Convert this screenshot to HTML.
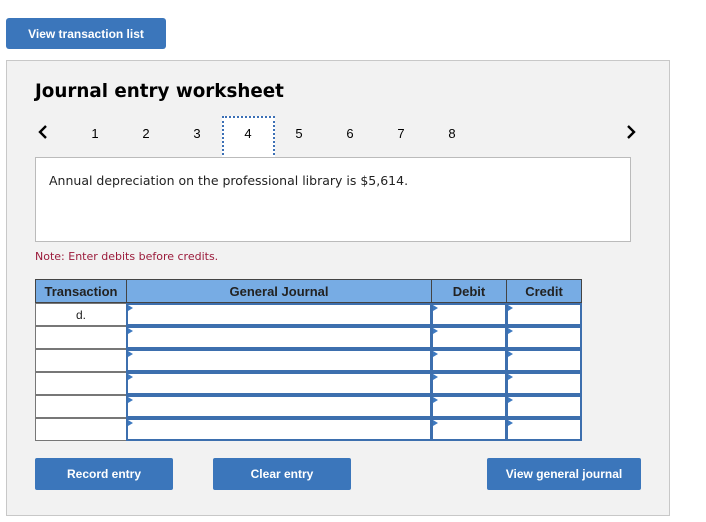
<!DOCTYPE html>
<html><head><meta charset="utf-8"><style>
*{margin:0;padding:0;box-sizing:border-box}
body{width:706px;height:522px;background:#fff;position:relative;font-family:"Liberation Sans",Arial,sans-serif;overflow:hidden}
.btn{position:absolute;background:#3b76bb;color:#fff;font-weight:bold;font-size:12px;display:flex;align-items:center;justify-content:center;border-radius:3px;font-family:"Liberation Sans",Arial,sans-serif}
.panel{position:absolute;left:6px;top:60px;width:664px;height:456px;background:#f2f2f2;border:1px solid #c8c8c8}
.title{position:absolute;left:35px;top:81px;font-family:"DejaVu Sans",Verdana,sans-serif;font-weight:bold;font-size:18.3px;color:#000}
.num{position:absolute;top:126px;font-size:13px;color:#000;width:20px;text-align:center;font-family:"Liberation Sans",Arial,sans-serif}
.box4{position:absolute;left:222px;top:116px;width:53px;height:43px;background:#fff;border:2px dotted #3b6fb5}
.desc{position:absolute;left:35px;top:157px;width:596px;height:85px;background:#fff;border:1px solid #bbb;font-family:"DejaVu Sans",Verdana,sans-serif;font-size:12.5px;color:#222;padding:15px 13px}
.note{position:absolute;left:35px;top:250px;font-family:"DejaVu Sans",Verdana,sans-serif;font-size:11px;color:#9b1b3b}
.hd{position:absolute;top:279px;height:24px;background:#77ace4;border:1px solid #444;font-size:13px;font-weight:bold;color:#222;display:flex;align-items:center;justify-content:center;font-family:"Liberation Sans",Arial,sans-serif}
.tc{position:absolute;left:35px;width:92px;height:23px;background:#fff;border:1px solid #777;font-size:12px;text-align:center;line-height:22px;color:#222;font-family:"Liberation Sans",Arial,sans-serif}
.in{position:absolute;height:23px;background:#fff;border:2px solid #3d6fae}
.in:before{content:"";position:absolute;left:0;top:0;border-left:5px solid #3d79c0;border-top:3px solid transparent;border-bottom:3px solid transparent}
</style></head><body>
<div class="btn" style="left:6px;top:18px;width:160px;height:31px">View transaction list</div>
<div class="panel"></div>
<div class="title">Journal entry worksheet</div>
<svg style="position:absolute;left:37px;top:124px" width="12" height="16"><path d="M9 2 L3 8 L9 14" stroke="#000" stroke-width="2.4" fill="none"/></svg>
<svg style="position:absolute;left:625px;top:124px" width="12" height="16"><path d="M3 2 L9 8 L3 14" stroke="#000" stroke-width="2.4" fill="none"/></svg>
<div class="box4"></div>
<div class="num" style="left:85px">1</div>
<div class="num" style="left:136px">2</div>
<div class="num" style="left:187px">3</div>
<div class="num" style="left:238px">4</div>
<div class="num" style="left:289px">5</div>
<div class="num" style="left:340px">6</div>
<div class="num" style="left:391px">7</div>
<div class="num" style="left:442px">8</div>
<div class="desc">Annual depreciation on the professional library is $5,614.</div>
<div class="note">Note: Enter debits before credits.</div>
<div class="hd" style="left:35px;width:92px">Transaction</div>
<div class="hd" style="left:126px;width:306px">General Journal</div>
<div class="hd" style="left:431px;width:76px">Debit</div>
<div class="hd" style="left:506px;width:76px">Credit</div>

<div class="tc" style="top:303px">d.</div>
<div class="tc" style="top:326px"></div>
<div class="tc" style="top:349px"></div>
<div class="tc" style="top:372px"></div>
<div class="tc" style="top:395px"></div>
<div class="tc" style="top:418px"></div>

<div class="in" style="left:126px;top:303px;width:306px"></div><div class="in" style="left:431px;top:303px;width:76px"></div><div class="in" style="left:506px;top:303px;width:76px"></div>
<div class="in" style="left:126px;top:326px;width:306px"></div><div class="in" style="left:431px;top:326px;width:76px"></div><div class="in" style="left:506px;top:326px;width:76px"></div>
<div class="in" style="left:126px;top:349px;width:306px"></div><div class="in" style="left:431px;top:349px;width:76px"></div><div class="in" style="left:506px;top:349px;width:76px"></div>
<div class="in" style="left:126px;top:372px;width:306px"></div><div class="in" style="left:431px;top:372px;width:76px"></div><div class="in" style="left:506px;top:372px;width:76px"></div>
<div class="in" style="left:126px;top:395px;width:306px"></div><div class="in" style="left:431px;top:395px;width:76px"></div><div class="in" style="left:506px;top:395px;width:76px"></div>
<div class="in" style="left:126px;top:418px;width:306px"></div><div class="in" style="left:431px;top:418px;width:76px"></div><div class="in" style="left:506px;top:418px;width:76px"></div>

<div class="btn" style="left:35px;top:458px;width:138px;height:32px;border-radius:2px">Record entry</div>
<div class="btn" style="left:213px;top:458px;width:138px;height:32px;border-radius:2px">Clear entry</div>
<div class="btn" style="left:487px;top:458px;width:154px;height:32px;border-radius:2px">View general journal</div>
</body></html>
